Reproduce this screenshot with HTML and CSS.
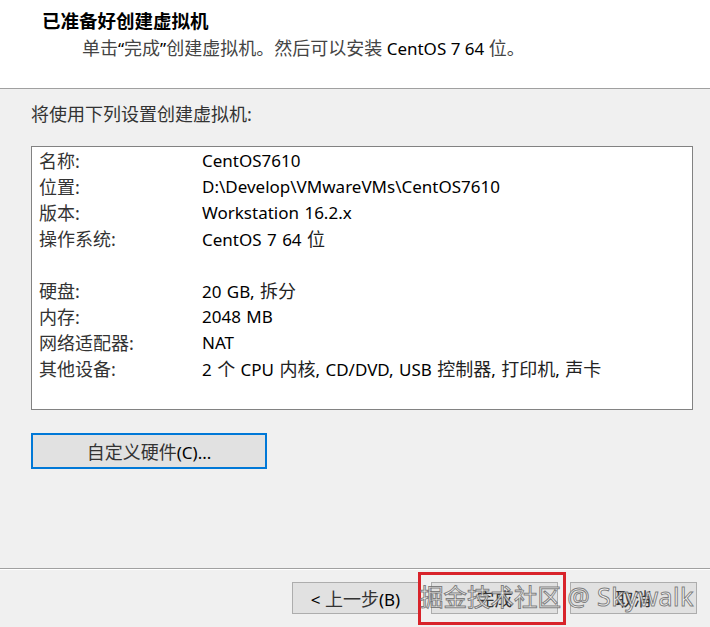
FILE: index.html
```html
<!DOCTYPE html>
<html lang="zh-CN">
<head>
<meta charset="utf-8">
<title>新建虚拟机向导</title>
<link rel="stylesheet" href="styles.css">
</head>
<body>
<div class="wizard">
  <header class="head">
    <h1 class="head-title">已准备好创建虚拟机</h1>
    <p class="head-sub"><span class="cj">单击</span>“<span class="cj">完成</span>”<span class="cj">创建虚拟机。然后可以安装</span> <span class="latin">CentOS 7 64</span> <span class="cj">位。</span></p>
  </header>

  <main class="content">
    <p class="intro">将使用下列设置创建虚拟机:</p>
    <div class="summary">
      <span class="key">名称:</span><span class="val">CentOS7610</span>
      <span class="key">位置:</span><span class="val">D:\Develop\VMwareVMs\CentOS7610</span>
      <span class="key">版本:</span><span class="val">Workstation 16.2.x</span>
      <span class="key">操作系统:</span><span class="val">CentOS 7 64 <span class="cj">位</span></span>
      <span class="gap"></span>
      <span class="key">硬盘:</span><span class="val">20 GB, <span class="cj">拆分</span></span>
      <span class="key">内存:</span><span class="val">2048 MB</span>
      <span class="key">网络适配器:</span><span class="val">NAT</span>
      <span class="key">其他设备:</span><span class="val">2 <span class="cj">个</span> CPU <span class="cj">内核</span>, CD/DVD, USB <span class="cj">控制器</span>, <span class="cj">打印机</span>, <span class="cj">声卡</span></span>
    </div>
    <button class="btn btn-focus"><span class="cj">自定义硬件</span>(C)...</button>
  </main>

  <footer class="foot">
    <button class="btn btn-nav">&lt; <span class="cj">上一步</span>(B)</button>
    <button class="btn btn-nav"><span class="cj">完成</span></button>
    <button class="btn btn-nav"><span class="cj">取消</span></button>
    <div class="mark-box"></div>
    <div class="watermark">掘金技术社区 <span class="wm-latin">@ Skywalk</span></div>
  </footer>
</div>
</body>
</html>
```

FILE: styles.css
```css
* { box-sizing: border-box; }

html, body {
  margin: 0;
  padding: 0;
  background: #f0f0f0;
}

body {
  font-family: "Noto Sans", "Noto Sans CJK SC", sans-serif;
  color: #1a1a1a;
}

/* Chinese runs are set a little larger than the Latin ones */
.cj { font-size: 18px; }

.wizard {
  width: 710px;
  height: 627px;
  display: flex;
  flex-direction: column;
}

/* white banner at the top */
.head {
  height: 89px;
  background: #fff;
  border-bottom: 1px solid #a0a0a0;
  padding: 9px 0 0 42px;
}

.head-title {
  margin: 0;
  font-size: 18.5px;
  line-height: 24px;
  font-weight: 700;
  color: #000;
}

.head-sub {
  margin: 3px 0 0 40px;
  font-size: 17px;
  line-height: 24px;
  color: #000;
}

.head-sub .cj { color: #444; }

/* settings area */
.content {
  flex: 1;
  padding: 12px 17px 0 31px;
  display: flex;
  flex-direction: column;
  align-items: flex-start;
}

.intro {
  margin: 0;
  font-size: 18px;
  line-height: 26px;
  color: #333;
}

.summary {
  margin-top: 19px;
  width: 662px;
  height: 264px;
  background: #fff;
  border: 1px solid #828282;
  padding: 1px 0 0 7px;
  display: grid;
  grid-template-columns: 163px 1fr;
  grid-auto-rows: 26px;
  align-items: center;
  font-size: 17px;
  line-height: 26px;
}

.summary .gap { grid-column: 1 / -1; }

.key { color: #333; font-size: 18px; }
.val { color: #000; word-spacing: 1px; }
.val .cj { color: #222; }

.btn {
  font-family: inherit;
  font-size: 17px;
  color: #000;
  background: #e1e1e1;
  border: 1px solid #adadad;
  padding: 0;
  margin: 0;
}

.btn .cj { color: #333; }

.btn-focus {
  margin-top: 23px;
  width: 236px;
  height: 36px;
  border: 2px solid #0078d7;
}

/* button strip at the bottom */
.foot {
  position: relative;
  height: 59px;
  border-top: 1px solid #a0a0a0;
  box-shadow: inset 0 1px 0 #fff;
  padding: 13px 13px 0 0;
  display: flex;
  justify-content: flex-end;
  align-items: flex-start;
  gap: 12px;
}

.btn-nav {
  width: 127px;
  height: 32px;
}

/* red highlight drawn around the finish button */
.mark-box {
  position: absolute;
  left: 418px;
  top: 3px;
  width: 148px;
  height: 53px;
  border: 3px solid #d8232a;
}

.watermark {
  position: absolute;
  left: 420px;
  top: 11px;
  font-size: 23.5px;
  line-height: 32px;
  white-space: nowrap;
  color: rgba(255, 255, 255, 0.75);
  -webkit-text-stroke: 1px rgba(90, 90, 90, 0.75);
}

.wm-latin {
  font-size: 25px;
  letter-spacing: 0.5px;
}
```
